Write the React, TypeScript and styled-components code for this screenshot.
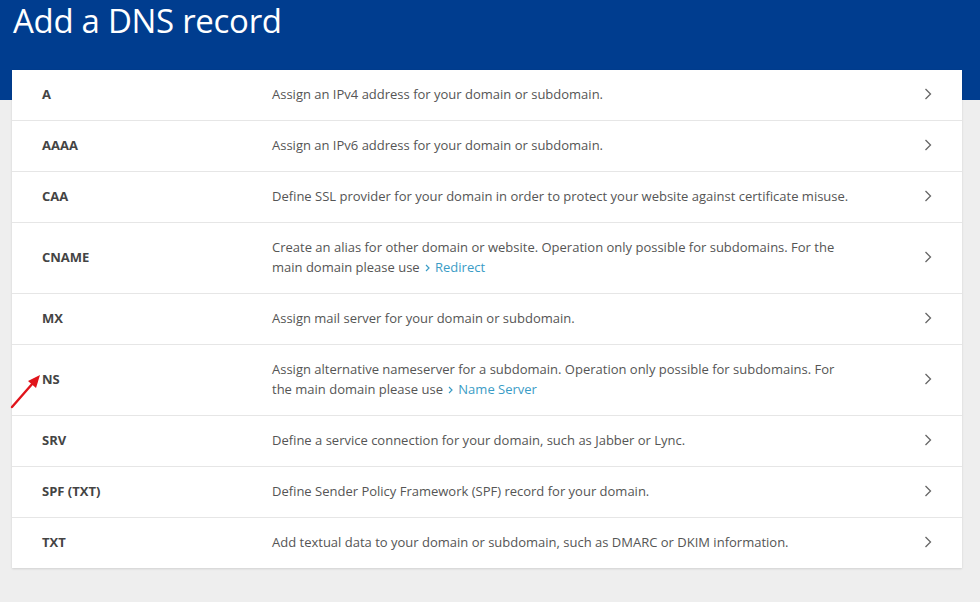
import React from "react";
import styled, { createGlobalStyle } from "styled-components";

interface RecordType {
  name: string;
  text: string;
  link?: string;
}

const records: RecordType[] = [
  { name: "A", text: "Assign an IPv4 address for your domain or subdomain." },
  { name: "AAAA", text: "Assign an IPv6 address for your domain or subdomain." },
  {
    name: "CAA",
    text: "Define SSL provider for your domain in order to protect your website against certificate misuse.",
  },
  {
    name: "CNAME",
    text: "Create an alias for other domain or website. Operation only possible for subdomains. For the main domain please use",
    link: "Redirect",
  },
  { name: "MX", text: "Assign mail server for your domain or subdomain." },
  {
    name: "NS",
    text: "Assign alternative nameserver for a subdomain. Operation only possible for subdomains. For the main domain please use",
    link: "Name Server",
  },
  { name: "SRV", text: "Define a service connection for your domain, such as Jabber or Lync." },
  { name: "SPF (TXT)", text: "Define Sender Policy Framework (SPF) record for your domain." },
  { name: "TXT", text: "Add textual data to your domain or subdomain, such as DMARC or DKIM information." },
];

const Chevron = () => (
  <svg width="8" height="12" viewBox="0 0 8 12" fill="none">
    <path d="M1.5 1l5 5-5 5" stroke="#666" strokeWidth="1.3" />
  </svg>
);

const SmallChevron = () => (
  <svg width="5" height="8" viewBox="0 0 5 8" fill="none">
    <path d="M1 1l3 3-3 3" stroke="#3a9cc6" strokeWidth="1.2" />
  </svg>
);

const App = () => {
  return (
    <>
      <GlobalStyle />
      <Page>
        <Header>
          <Title>Add a DNS record</Title>
        </Header>
        <Card>
          {records.map((r) => (
            <Row key={r.name}>
              <Name>
                {r.name}
                {r.name === "NS" && (
                  <Arrow width="34" height="36" viewBox="0 0 34 36">
                    <path d="M2 34L23 10" stroke="#e0141b" strokeWidth="2.4" strokeLinecap="round" />
                    <path d="M30 2L18 8l8 7z" fill="#e0141b" />
                  </Arrow>
                )}
              </Name>
              <Desc>
                {r.text}
                {r.link && (
                  <>
                    {" "}
                    <Link>
                      <SmallChevron />
                      {r.link}
                    </Link>
                  </>
                )}
              </Desc>
              <ChevronWrap>
                <Chevron />
              </ChevronWrap>
            </Row>
          ))}
        </Card>
      </Page>
    </>
  );
};

const GlobalStyle = createGlobalStyle`
  html, body {
    margin: 0;
    padding: 0;
    background: #eeeeee;
    font-family: "Open Sans", "Liberation Sans", sans-serif;
  }
`;

const Page = styled.div`
  width: 980px;
  height: 602px;
  overflow: hidden;
  background: #eeeeee;
`;

const Header = styled.div`
  height: 100px;
  background: #003d8f;
  padding: 0 13px;
  box-sizing: border-box;
`;

const Title = styled.h1`
  margin: 0;
  font-size: 33px;
  line-height: 42px;
  font-weight: 400;
  color: #ffffff;
  letter-spacing: -0.3px;
`;

const Card = styled.div`
  margin: -30px 18px 0 12px;
  background: #ffffff;
  box-shadow: 0 1px 2px rgba(0, 0, 0, 0.12);
`;

const Row = styled.div`
  display: grid;
  grid-template-columns: 230px 580px 1fr;
  align-items: center;
  padding: 0 30px;
  border-bottom: 1px solid #e6e6e6;
  &:last-child {
    border-bottom: none;
  }
`;

const Name = styled.div`
  position: relative;
  font-size: 13px;
  font-weight: 700;
  color: #444;
  margin-top: -3px;
`;

const Arrow = styled.svg`
  position: absolute;
  left: -32px;
  top: 3px;
`;

const Desc = styled.div`
  font-size: 13px;
  line-height: 20px;
  color: #555;
  padding: 14px 0 16px;
`;

const Link = styled.span`
  color: #3a9cc6;
  svg {
    margin: 0 5px 0 2px;
    vertical-align: 0px;
  }
`;

const ChevronWrap = styled.div`
  display: flex;
  justify-content: flex-end;
  margin-top: -3px;
`;

export default App;
